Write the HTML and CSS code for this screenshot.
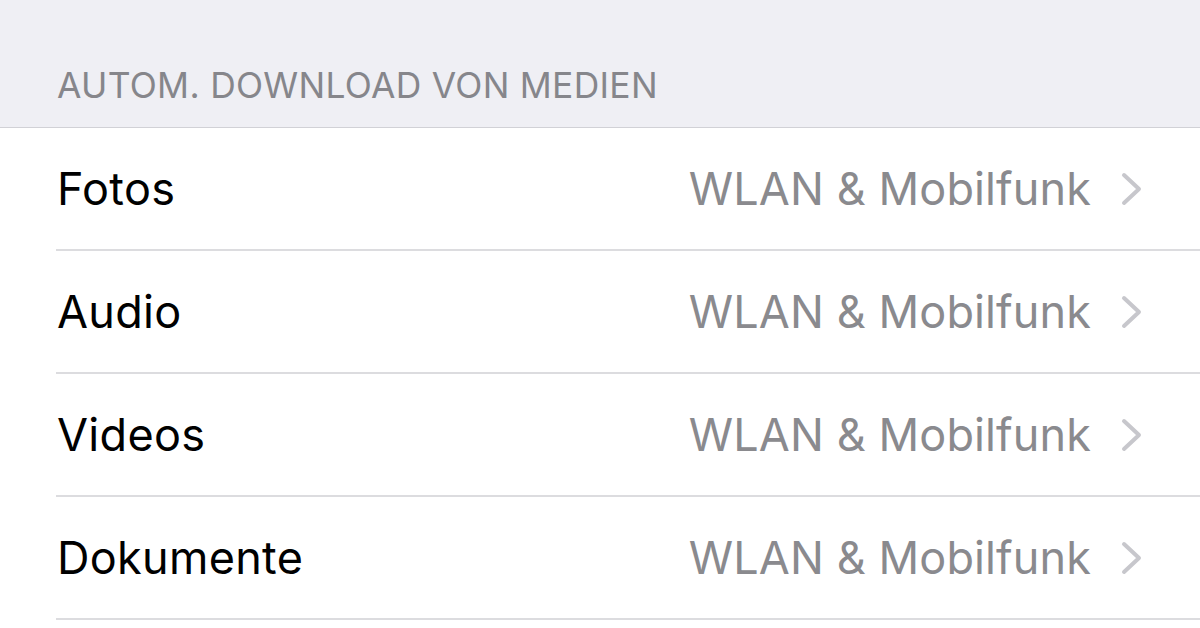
FILE: index.html
```html
<!DOCTYPE html>
<html lang="de">
<head>
<meta charset="utf-8">
<link rel="stylesheet" href="styles.css">
</head>
<body>
<div class="screen">
  <div class="section-header">AUTOM. DOWNLOAD VON MEDIEN</div>
  <ul class="list">
    <li class="row"><span class="label">Fotos</span><span class="value">WLAN &amp; Mobilfunk</span><svg class="chev" viewBox="0 0 22 34" width="22" height="34"><path d="M3 3 L18 17 L3 31" fill="none" stroke="#c7c7cc" stroke-width="4" stroke-linecap="round" stroke-linejoin="round"/></svg></li>
    <li class="row"><span class="label">Audio</span><span class="value">WLAN &amp; Mobilfunk</span><svg class="chev" viewBox="0 0 22 34" width="22" height="34"><path d="M3 3 L18 17 L3 31" fill="none" stroke="#c7c7cc" stroke-width="4" stroke-linecap="round" stroke-linejoin="round"/></svg></li>
    <li class="row"><span class="label">Videos</span><span class="value">WLAN &amp; Mobilfunk</span><svg class="chev" viewBox="0 0 22 34" width="22" height="34"><path d="M3 3 L18 17 L3 31" fill="none" stroke="#c7c7cc" stroke-width="4" stroke-linecap="round" stroke-linejoin="round"/></svg></li>
    <li class="row"><span class="label">Dokumente</span><span class="value">WLAN &amp; Mobilfunk</span><svg class="chev" viewBox="0 0 22 34" width="22" height="34"><path d="M3 3 L18 17 L3 31" fill="none" stroke="#c7c7cc" stroke-width="4" stroke-linecap="round" stroke-linejoin="round"/></svg></li>
  </ul>
</div>
</body>
</html>
```
FILE: styles.css
```css
* { box-sizing: border-box; }
html, body { margin: 0; padding: 0; background: #ffffff; }
body { font-family: Inter, "Noto Sans", sans-serif; width: 1200px; height: 628px; overflow: hidden; }
.screen { width: 1200px; }
.section-header {
  height: 128px;
  background: #efeff4;
  border-bottom: 1px solid #d1d1d6;
  padding: 66px 0 0 57px;
  font-size: 35.4px;
  line-height: 40px;
  color: #86868b;
  letter-spacing: 0.3px;
}
.list { list-style: none; margin: 0; padding: 0 0 0 56px; }
.row {
  height: 123px;
  display: flex;
  align-items: center;
  border-bottom: 2px solid #dcdcdf;
  padding-right: 57px;
}
.label { font-size: 45px; color: #000; flex: 1; padding-left: 1px; letter-spacing: 0.3px; }
.value { font-size: 45px; color: #8a8a8e; margin-right: 30px; letter-spacing: 0.1px; }
.chev { display: block; }
```
